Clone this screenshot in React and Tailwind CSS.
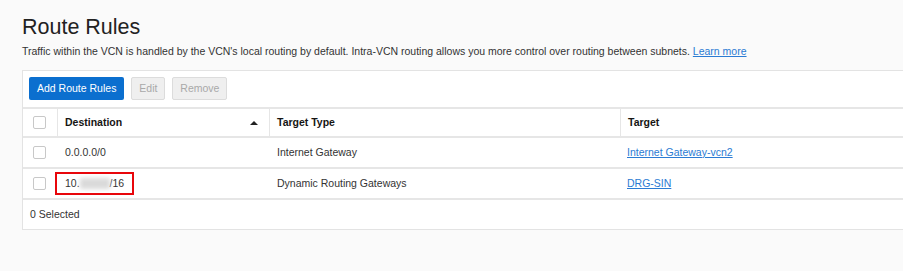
import React from "react";

const rows = [
  { dest: "0.0.0.0/0", type: "Internet Gateway", target: "Internet Gateway-vcn2" },
  { dest: null, type: "Dynamic Routing Gateways", target: "DRG-SIN" },
];

const Check = () => (
  <span className="block w-[13px] h-[13px] rounded-[2px] border border-[#c8c8c8] bg-white" />
);

export default function App() {
  return (
    <div className="w-[903px] h-[271px] overflow-hidden bg-[#fafafa] text-[#333] font-['Liberation_Sans',Arial,sans-serif]">
      <div className="pl-[22px] pt-[12px]">
        <h1 className="text-[21.5px] leading-[30px] text-[#222]">Route Rules</h1>
        <p className="mt-[2px] text-[10.5px] leading-[14px]">
          Traffic within the VCN is handled by the VCN's local routing by default. Intra-VCN routing allows you more control over routing between subnets.{" "}
          <a href="#" className="text-[#2b7bd3] underline">Learn more</a>
        </p>

        {/* panel */}
        <div className="mt-[12px] bg-white border border-r-0 border-[#e3e3e3]">
          <div className="flex gap-[7px] px-[6px] pt-[6px] pb-[7px]">
            <button className="h-[23px] px-[8px] rounded-[2px] bg-[#0b6fcf] text-white text-[10.5px]">Add Route Rules</button>
            <button className="h-[23px] w-[34px] rounded-[2px] bg-[#efefef] border border-[#dcdcdc] text-[#a9a9a9] text-[10.5px]">Edit</button>
            <button className="h-[23px] w-[55px] rounded-[2px] bg-[#efefef] border border-[#dcdcdc] text-[#a9a9a9] text-[10.5px]">Remove</button>
          </div>

          <div className="grid grid-cols-[34px_212px_351px_1fr] text-[10.5px]">
            {/* header */}
            <div className="h-[31px] border-t-2 border-b-2 border-[#e6e6e6] flex items-center pl-[10px]"><Check /></div>
            <div className="h-[31px] border-t-2 border-b-2 border-l border-[#e6e6e6] flex items-center justify-between pl-[7px] pr-[11px] font-bold text-[#161513]">
              Destination
              <span className="w-0 h-0 border-l-[4px] border-r-[4px] border-b-[4px] border-l-transparent border-r-transparent border-b-[#222]" />
            </div>
            <div className="h-[31px] border-t-2 border-b-2 border-l border-[#e6e6e6] flex items-center pl-[7px] font-bold text-[#161513]">Target Type</div>
            <div className="h-[31px] border-t-2 border-b-2 border-l border-[#e6e6e6] flex items-center pl-[7px] font-bold text-[#161513]">Target</div>

            {rows.map((r, i) => (
              <React.Fragment key={i}>
                <div className="h-[31px] border-b-2 border-[#e6e6e6] flex items-center pl-[10px]"><Check /></div>
                <div className="h-[31px] border-b-2 border-[#e6e6e6] flex items-center pl-[8px]">
                  {r.dest ? (
                    r.dest
                  ) : (
                    <span className="-ml-[10px] flex items-center h-[23px] px-[8px] border-2 border-[#e8060b]">
                      10.
                      <span className="inline-block w-[30px] h-[11px] bg-[#dadada] blur-[2px]" />
                      /16
                    </span>
                  )}
                </div>
                <div className="h-[31px] border-b-2 border-[#e6e6e6] flex items-center pl-[8px]">{r.type}</div>
                <div className="h-[31px] border-b-2 border-[#e6e6e6] flex items-center pl-[7px]">
                  <a href="#" className="text-[#2b7bd3] underline">{r.target}</a>
                </div>
              </React.Fragment>
            ))}
          </div>

          <div className="h-[29px] flex items-center pl-[7px] text-[10.5px]">0 Selected</div>
        </div>
      </div>
    </div>
  );
}
